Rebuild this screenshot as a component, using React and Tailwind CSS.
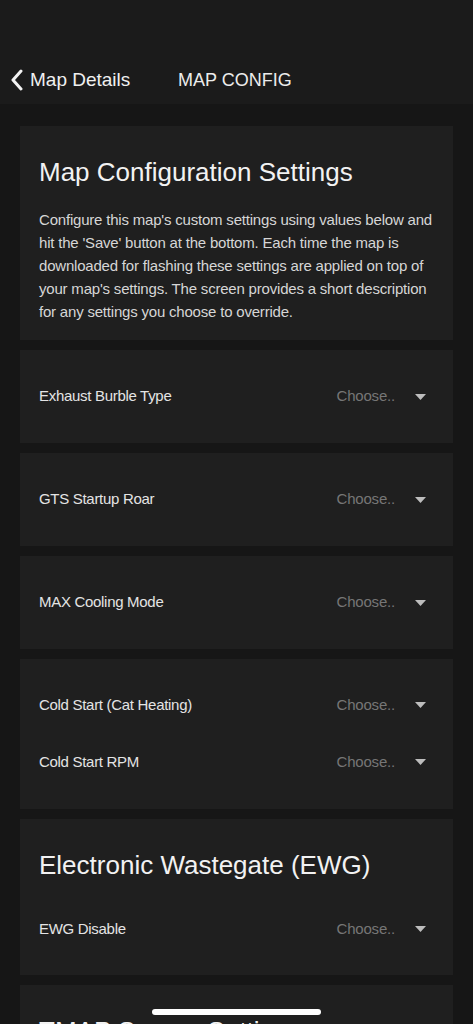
import React from 'react';

const font = { fontFamily: '"Liberation Sans", Arial, sans-serif' };

const Caret = () => (
  <svg width="11" height="6" viewBox="0 0 11 6" className="ml-[20px]">
    <path d="M0 0 L11 0 L5.5 6 Z" fill="#bdbdbd" />
  </svg>
);

const Row = ({ label }) => (
  <div className="flex items-center justify-between h-[28px] pr-[8px]">
    <span className="text-[15px] tracking-[-0.3px] text-[#e4e4e4]">{label}</span>
    <div className="flex items-center">
      <span className="text-[15px] tracking-[-0.2px] text-[#767676]">Choose..</span>
      <Caret />
    </div>
  </div>
);

const Card = ({ children, className = '' }) => (
  <div className={`bg-[#1f1f1f] pl-[19px] pr-[19px] ${className}`}>{children}</div>
);

export default function App() {
  return (
    <div className="min-h-screen bg-[#161616] overflow-hidden" style={font}>
      {/* Header */}
      <div className="h-[104px] bg-[#1b1b1b] pt-[58px]">
        <div className="flex items-center h-[44px]">
          <div className="flex items-center pl-[10px] w-[178px]">
            <svg width="13" height="22" viewBox="0 0 13 22">
              <path d="M11 2 L3 11 L11 20" stroke="#f2f2f2" strokeWidth="3" fill="none" strokeLinecap="round" strokeLinejoin="round" />
            </svg>
            <span className="ml-[7px] text-[19px] text-[#f0f0f0]">Map Details</span>
          </div>
          <span className="text-[18px] text-[#ececec]">MAP CONFIG</span>
        </div>
      </div>

      <div className="px-[20px] pt-[22px] flex flex-col gap-[10px]">
        <Card className="pt-[30px] pb-[17px]">
          <h1 className="text-[26px] leading-[32px] text-[#f2f2f2]">
            Map Configuration Settings
          </h1>
          <p className="mt-[20px] text-[15px] leading-[23px] tracking-[-0.2px] text-[#d6d6d6]">
            Configure this map's custom settings using values below and hit the 'Save' button at the bottom. Each time the map is downloaded for flashing these settings are applied on top of your map's settings. The screen provides a short description for any settings you choose to override.
          </p>
        </Card>

        <Card className="h-[93px] flex flex-col justify-center">
          <Row label="Exhaust Burble Type" />
        </Card>
        <Card className="h-[93px] flex flex-col justify-center">
          <Row label="GTS Startup Roar" />
        </Card>
        <Card className="h-[93px] flex flex-col justify-center">
          <Row label="MAX Cooling Mode" />
        </Card>

        <Card className="pt-[32px] pb-[33px] flex flex-col gap-[29px]">
          <Row label="Cold Start (Cat Heating)" />
          <Row label="Cold Start RPM" />
        </Card>

        <Card className="pt-[30px] pb-[32px]">
          <h2 className="text-[26px] leading-[32px] text-[#f2f2f2]">Electronic Wastegate (EWG)</h2>
          <div className="mt-[34px]">
            <Row label="EWG Disable" />
          </div>
        </Card>

        <Card className="pt-[30px] pb-[32px]">
          <h2 className="text-[26px] leading-[32px] text-[#f2f2f2]">TMAP Sensor Settings</h2>
          <div className="mt-[34px]">
            <Row label="TMAP Sensor" />
          </div>
        </Card>
      </div>

      <div className="fixed bottom-[9px] left-0 right-0 flex justify-center">
        <div className="w-[169px] h-[6px] rounded-full bg-white" />
      </div>
    </div>
  );
}
